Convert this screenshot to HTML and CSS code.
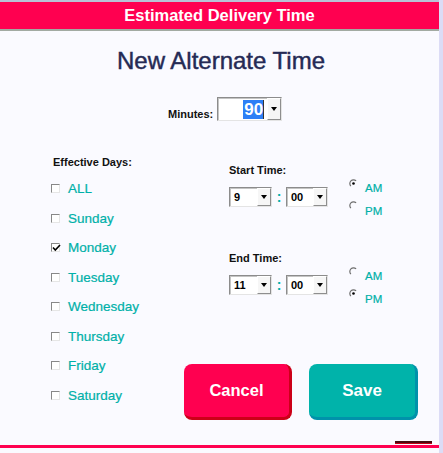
FILE: index.html
```html
<!DOCTYPE html>
<html>
<head>
<meta charset="utf-8">
<title>Estimated Delivery Time</title>
<link rel="stylesheet" href="styles.css">
</head>
<body>
<div class="app">
  <div class="header">Estimated Delivery Time</div>
  <h1 class="title">New Alternate Time</h1>
  <div class="minutes-row">
    <span class="lbl">Minutes:</span>
    <div class="combo combo-min">
      <div class="combo-text"><span class="sel">90</span><span class="caret"></span></div>
      <div class="combo-btn"><span class="arrow"></span></div>
    </div>
  </div>
  <div class="main">
    <div class="days">
      <div class="lbl days-head">Effective Days:</div>
      <ul class="day-list">
        <li class="day"><span class="cb"></span><span>ALL</span></li>
        <li class="day"><span class="cb"></span><span>Sunday</span></li>
        <li class="day"><span class="cb"><svg class="tick" width="9" height="8" viewBox="0 0 9 8"><path d="M1 3.5 L3.3 6 L8 1" fill="none" stroke="#000" stroke-width="1.6"/></svg></span><span>Monday</span></li>
        <li class="day"><span class="cb"></span><span>Tuesday</span></li>
        <li class="day"><span class="cb"></span><span>Wednesday</span></li>
        <li class="day"><span class="cb"></span><span>Thursday</span></li>
        <li class="day"><span class="cb"></span><span>Friday</span></li>
        <li class="day"><span class="cb"></span><span>Saturday</span></li>
      </ul>
    </div>
    <div class="right">
      <div class="time-group">
        <div class="time-fields">
          <div class="lbl">Start Time:</div>
          <div class="time-row">
            <div class="combo combo-h"><div class="combo-text left">9</div><div class="combo-btn"><span class="arrow"></span></div></div>
            <span class="colon">:</span>
            <div class="combo combo-m"><div class="combo-text left">00</div><div class="combo-btn"><span class="arrow"></span></div></div>
          </div>
        </div>
        <div class="radios">
          <div class="radio"><svg width="9" height="9" viewBox="0 0 9 9"><path d="M1.9 7.1 A3.6 3.6 0 0 1 7.1 1.9" fill="none" stroke="#6e6e6e" stroke-width="1.2"/><circle cx="4.5" cy="4.5" r="1.3" fill="#000"/></svg><span>AM</span></div>
          <div class="radio"><svg width="9" height="9" viewBox="0 0 9 9"><path d="M1.9 7.1 A3.6 3.6 0 0 1 7.1 1.9" fill="none" stroke="#6e6e6e" stroke-width="1.2"/></svg><span>PM</span></div>
        </div>
      </div>
      <div class="time-group end">
        <div class="time-fields">
          <div class="lbl">End Time:</div>
          <div class="time-row">
            <div class="combo combo-h"><div class="combo-text left">11</div><div class="combo-btn"><span class="arrow"></span></div></div>
            <span class="colon">:</span>
            <div class="combo combo-m"><div class="combo-text left">00</div><div class="combo-btn"><span class="arrow"></span></div></div>
          </div>
        </div>
        <div class="radios">
          <div class="radio"><svg width="9" height="9" viewBox="0 0 9 9"><path d="M1.9 7.1 A3.6 3.6 0 0 1 7.1 1.9" fill="none" stroke="#6e6e6e" stroke-width="1.2"/></svg><span>AM</span></div>
          <div class="radio"><svg width="9" height="9" viewBox="0 0 9 9"><path d="M1.9 7.1 A3.6 3.6 0 0 1 7.1 1.9" fill="none" stroke="#6e6e6e" stroke-width="1.2"/><circle cx="4.5" cy="4.5" r="1.3" fill="#000"/></svg><span>PM</span></div>
        </div>
      </div>
      <div class="buttons">
        <div class="btn btn-cancel">Cancel</div>
        <div class="btn btn-save">Save</div>
      </div>
    </div>
  </div>
  <div class="footer">
    <div class="mark"></div>
    <div class="pink-line"></div>
  </div>
</div>
</body>
</html>
```
FILE: styles.css
```css
* { box-sizing: border-box; }
body {
  margin: 0;
  background: #dcdcf6;
  font-family: "Liberation Sans", Arial, sans-serif;
}
.app {
  width: 439px;
  height: 453px;
  background: #fafaff;
  border-top: 2px solid #b8c2d6;
  display: flex;
  flex-direction: column;
}
.header {
  height: 29px;
  background: #ff0050;
  border-bottom: 2px solid #a2aaa2;
  color: #fff;
  font-weight: bold;
  font-size: 16.5px;
  line-height: 27px;
  text-align: center;
}
.title {
  margin: 16px 0 0;
  padding-left: 3px;
  font-size: 24px;
  line-height: 28px;
  font-weight: normal;
  color: #252a55;
  -webkit-text-stroke: 0.45px #252a55;
  text-align: center;
}
.lbl {
  font-size: 11px;
  font-weight: bold;
  color: #111;
  line-height: 14px;
}
.minutes-row {
  display: flex;
  align-items: flex-end;
  margin-top: 22px;
  padding-left: 168px;
  height: 24px;
}
.combo {
  display: flex;
  background: #fff;
  border: 1px solid;
  border-color: #8c8c8c #e4e4e4 #e4e4e4 #8c8c8c;
  box-shadow: inset 1px 1px 0 #c4c4c4;
}
.combo-min {
  margin-left: 4px;
  width: 65px;
  height: 24px;
}
.combo-text {
  flex: 1;
  display: flex;
  align-items: center;
  justify-content: flex-end;
  font-weight: bold;
  color: #000;
}
.combo-text.left {
  justify-content: flex-start;
  padding-left: 4px;
  font-size: 11px;
}
.sel {
  background: #2d7ff6;
  color: #fff;
  font-size: 17px;
  line-height: 19px;
  padding: 0 0 0 1px;
}
.caret {
  width: 1px;
  height: 19px;
  background: #333;
  margin-right: 3px;
}
.combo-btn {
  width: 14px;
  display: flex;
  align-items: center;
  justify-content: center;
  background: #f6f6f6;
  border-right: 1px solid #8e8e8e;
  border-bottom: 1px solid #8e8e8e;
  border-left: 1px solid #fff;
  border-top: 1px solid #fff;
}
.arrow {
  width: 0;
  height: 0;
  border-left: 3px solid transparent;
  border-right: 3px solid transparent;
  border-top: 4px solid #000;
}
.main {
  display: grid;
  grid-template-columns: 133px 1fr;
  padding-left: 51px;
  margin-top: 34px;
}
.days-head {
  padding-left: 2px;
}
.day-list {
  list-style: none;
  margin: 5px 0 0;
  padding: 0;
}
.day {
  height: 29.5px;
  display: flex;
  align-items: center;
  gap: 8px;
  color: #00b0a8;
  -webkit-text-stroke: 0.2px #00b0a8;
  font-size: 13.5px;
}
.cb {
  width: 9px;
  height: 9px;
  border: 1px solid;
  border-color: #888 #e6e6e6 #e6e6e6 #888;
  background: #fff;
  display: flex;
  align-items: center;
  justify-content: center;
  overflow: visible;
}
.tick {
  flex: none;
  margin-left: 1px;
}
.right {
  padding-top: 8px;
  display: flex;
  flex-direction: column;
}
.time-group {
  display: flex;
  margin-left: 45px;
}
.time-group.end {
  margin-top: 29px;
}
.time-row {
  display: flex;
  align-items: center;
  height: 20px;
  margin-top: 10px;
}
.combo-h {
  width: 43px;
  height: 20px;
}
.combo-m {
  width: 42px;
  height: 20px;
}
.colon {
  width: 14px;
  text-align: center;
  color: #00b0a8;
  font-weight: bold;
  font-size: 14px;
}
.radios {
  margin-left: 21px;
  margin-top: 14px;
}
.radio {
  height: 22.5px;
  display: flex;
  align-items: flex-start;
  gap: 7px;
  color: #00b0a8;
  -webkit-text-stroke: 0.2px #00b0a8;
  font-size: 11.5px;
}
.radio svg {
  margin-top: 1.5px;
}
.radio span {
  padding-top: 4px;
  line-height: 14px;
}
.buttons {
  display: flex;
  gap: 17px;
  margin-top: 54px;
}
.btn {
  height: 56px;
  border-radius: 8px;
  color: #fff;
  font-weight: bold;
  display: flex;
  align-items: center;
  justify-content: center;
  border-right: 3px solid;
  border-bottom: 3px solid;
}
.btn-cancel {
  width: 108px;
  background: #ff0050;
  border-color: #cc0018;
  font-size: 16.5px;
}
.btn-save {
  width: 109px;
  background: #00b3aa;
  border-color: #0092aa;
  font-size: 17px;
}
.footer {
  margin-top: auto;
  padding-bottom: 5px;
}
.mark {
  width: 37px;
  height: 3px;
  margin-left: 395px;
  margin-bottom: 1px;
  background: #4a0a10;
  border-bottom: 1px solid #c00018;
}
.pink-line {
  height: 3px;
  background: #ff0050;
}
```
